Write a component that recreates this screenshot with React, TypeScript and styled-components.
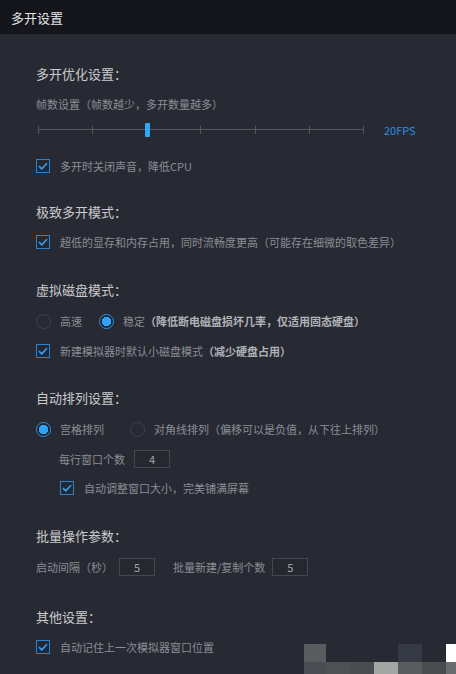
import styled, { createGlobalStyle } from 'styled-components';

const GlobalStyle = createGlobalStyle`
    html, body {
        margin: 0;
        padding: 0;
        background: #282a33;
    }
    body {
        font-family: "Noto Sans CJK SC", "Noto Sans", sans-serif;
    }
`

const Page = styled.div`
    position: relative;
    width: 456px;
    height: 674px;
    overflow: hidden;
    background: #282a33;
`

const Header = styled.div`
    height: 34px;
    background: #15161b;
    display: flex;
    align-items: center;
    padding-left: 11px;
    color: #e4e4e6;
    font-size: 13px;
`

const Body = styled.div`
    padding: 30px 36px 0 36px;
    display: flex;
    flex-direction: column;
`

const Section = styled.div<{ $top?: number }>`
    display: flex;
    flex-direction: column;
    margin-top: ${p => p.$top ?? 0}px;
`

const SectionTitle = styled.div`
    height: 20px;
    line-height: 20px;
    font-size: 13px;
    color: #c9cacd;
`

const Row = styled.div<{ $top?: number; $indent?: number }>`
    display: flex;
    align-items: center;
    height: 20px;
    margin-top: ${p => p.$top ?? 10}px;
    padding-left: ${p => p.$indent ?? 0}px;
    font-size: 11px;
    color: #8b8d93;
    white-space: nowrap;
`

const Note = styled.span`
    color: #b0b2b6;
    font-weight: bold;
`

const Box = styled.span`
    width: 14px;
    height: 14px;
    box-sizing: border-box;
    border: 1px solid #2b82cf;
    background: #252830;
    display: flex;
    align-items: center;
    justify-content: center;
    margin-right: 10px;
    flex: none;
`

const Circle = styled.span<{ $on?: boolean }>`
    width: 15px;
    height: 15px;
    box-sizing: border-box;
    border-radius: 50%;
    border: 1px solid ${p => (p.$on ? '#2a93ea' : '#40434c')};
    background: ${p => (p.$on ? 'radial-gradient(circle, #2ea2f6 0 4.5px, #20232a 5px)' : 'transparent')};
    margin-right: 9px;
    flex: none;
`

const RadioItem = styled.span<{ $gap?: number }>`
    display: flex;
    align-items: center;
    margin-right: ${p => p.$gap ?? 0}px;
`

const NumBox = styled.span<{ $left?: number; $right?: number }>`
    width: 36px;
    height: 18px;
    box-sizing: border-box;
    border: 1px solid #45474f;
    background: #262830;
    color: #a4a5a8;
    font-size: 11px;
    display: flex;
    align-items: center;
    justify-content: center;
    margin-left: ${p => p.$left ?? 6}px;
    margin-right: ${p => p.$right ?? 0}px;
`

const SliderRow = styled.div`
    display: flex;
    align-items: center;
    height: 32px;
`

const Track = styled.div`
    position: relative;
    width: 326px;
    margin-left: 2px;
    height: 8px;
    display: flex;
    justify-content: space-between;
    &::before {
        content: '';
        position: absolute;
        left: 0;
        right: 0;
        top: 3px;
        height: 1px;
        background: #55575d;
    }
`

const Tick = styled.span`
    width: 1px;
    height: 8px;
    background: #55575d;
`

const Handle = styled.span`
    position: absolute;
    top: -3px;
    width: 5px;
    height: 14px;
    border-radius: 1px;
    background: #31a7f6;
`

const Fps = styled.span`
    margin-left: 20px;
    font-size: 11px;
    color: #2b8ee2;
`

const Mosaic = styled.div`
    position: absolute;
    left: 304px;
    top: 644px;
    display: grid;
    grid-template-columns: 22px 24px 24px 24px 24px 24px 10px;
    grid-template-rows: 18px 12px;
`

const Cell = styled.span<{ $c: string }>`
    background: ${p => p.$c};
`

const Check = ({ children, top, indent }: { children: React.ReactNode; top?: number; indent?: number }) => (
    <Row $top={top} $indent={indent}>
        <Box>
            <svg width="10" height="8" viewBox="0 0 10 8">
                <path d="M1 4.2 L3.8 6.8 L9 1.2" fill="none" stroke="#3a9ff0" strokeWidth="1.6" />
            </svg>
        </Box>
        {children}
    </Row>
)

const mosaic = [
    '#5a5c60', '#282a33', '#282a33', '#282a33', '#363a44', '#282a33', '#ffffff',
    '#4a4d52', '#4f5054', '#4a4b4f', '#a4a6a4', '#5a5b5e', '#4a4b4e', '#6a6b6e',
]

const App = () => {
    const ticks = 7
    const value = 2

    return (
        <Page>
            <GlobalStyle />
            <Header>多开设置</Header>
            <Body>
                <Section>
                    <SectionTitle>多开优化设置：</SectionTitle>
                    <Row>帧数设置（帧数越少，多开数量越多）</Row>
                    <SliderRow>
                        <Track>
                            {Array.from({ length: ticks }).map((_, i) => <Tick key={i} />)}
                            <Handle style={{ left: `calc(${(value / (ticks - 1)) * 100}% - 2px)` }} />
                        </Track>
                        <Fps>20FPS</Fps>
                    </SliderRow>
                    <Check>多开时关闭声音，降低CPU</Check>
                </Section>

                <Section $top={26}>
                    <SectionTitle>极致多开模式：</SectionTitle>
                    <Check>超低的显存和内存占用，同时流畅度更高（可能存在细微的取色差异）</Check>
                </Section>

                <Section $top={28}>
                    <SectionTitle>虚拟磁盘模式：</SectionTitle>
                    <Row $top={11}>
                        <RadioItem $gap={17}><Circle />高速</RadioItem>
                        <RadioItem><Circle $on />稳定<Note>（降低断电磁盘损坏几率，仅适用固态硬盘）</Note></RadioItem>
                    </Row>
                    <Check>新建模拟器时默认小磁盘模式<Note>（减少硬盘占用）</Note></Check>
                </Section>

                <Section $top={27}>
                    <SectionTitle>自动排列设置：</SectionTitle>
                    <Row $top={11}>
                        <RadioItem $gap={26}><Circle $on />宫格排列</RadioItem>
                        <RadioItem><Circle />对角线排列（偏移可以是负值，从下往上排列）</RadioItem>
                    </Row>
                    <Row $indent={23}>
                        每行窗口个数<NumBox $left={9}>4</NumBox>
                    </Row>
                    <Check top={9} indent={24}>自动调整窗口大小，完美铺满屏幕</Check>
                </Section>

                <Section $top={28}>
                    <SectionTitle>批量操作参数：</SectionTitle>
                    <Row $top={11}>
                        启动间隔（秒）<NumBox $right={18}>5</NumBox>
                        批量新建/复制个数<NumBox $left={7}>5</NumBox>
                    </Row>
                </Section>

                <Section $top={30}>
                    <SectionTitle>其他设置：</SectionTitle>
                    <Check>自动记住上一次模拟器窗口位置</Check>
                </Section>
            </Body>
            <Mosaic>
                {mosaic.map((c, i) => <Cell key={i} $c={c} />)}
            </Mosaic>
        </Page>
    );
}

export default App;
